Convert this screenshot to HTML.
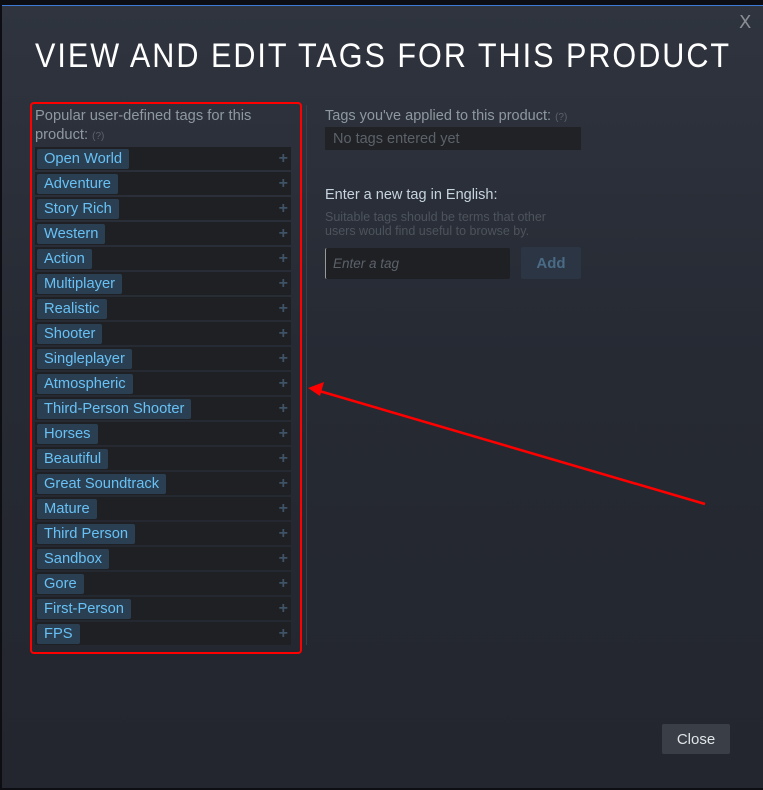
<!DOCTYPE html>
<html><head><style>
*{margin:0;padding:0;box-sizing:border-box}
body{width:763px;height:790px;background:#0c0e13;position:relative;overflow:hidden;font-family:"Liberation Sans","DejaVu Sans",sans-serif}
.dlg{position:absolute;left:2px;top:5px;width:761px;height:783px;background:linear-gradient(180deg,#2f343f 0%,#262a33 45%,#23262e 100%);border-top:1px solid #3d7ad6}
.x{position:absolute;left:739px;top:12px;color:#8a8e94;font-size:18px;font-family:"DejaVu Sans",sans-serif}
.title{position:absolute;left:35px;top:36px;color:#fff;font-size:34px;line-height:41px;letter-spacing:2.2px;white-space:nowrap;font-family:"Liberation Sans",sans-serif;transform:scaleX(0.9);transform-origin:left}
.red{position:absolute;left:30px;top:102px;width:272px;height:552px;border:2.5px solid #f00;border-radius:4px}
.lbl{position:absolute;left:35px;top:107px;width:262px;color:#8f98a0;font-size:14.7px;line-height:19px}
.q{font-size:10px;color:#5c626a}
.row{position:absolute;left:35px;width:256px;height:23px;background:#1f2024}
.tag{position:absolute;left:2px;top:2px;height:20px;background:#2b3f52;color:#67c1f5;font-size:14.7px;line-height:21px;padding:0 7px;border-radius:2px;white-space:nowrap}
.plus{position:absolute;right:3px;top:0;line-height:23px;color:#3e5366;font-size:16px;font-weight:bold}
.vl{position:absolute;left:306px;top:105px;width:1px;height:540px;background:#3a3e46}
.t2{position:absolute;left:325px;top:108px;color:#8f98a0;font-size:14.5px}
.box{position:absolute;left:325px;top:127px;width:256px;height:23px;background:#202226;color:#5c626a;font-size:14.5px;line-height:25px;padding-left:8px}
.t3{position:absolute;left:325px;top:187px;color:#c6d4df;font-size:14.5px}
.t4{position:absolute;left:325px;top:210px;color:#4d545c;font-size:12.5px;line-height:14px}
.inp{position:absolute;left:325px;top:248px;width:185px;height:31px;background:#1e2024;border-radius:2px;color:#5c626a;font-style:italic;font-size:13.5px;line-height:31px;padding-left:7px;border-left:1px solid #999}
.add{position:absolute;left:521px;top:247px;width:60px;height:32px;background:#2b3543;color:#4a6b85;font-size:15px;font-weight:bold;text-align:center;line-height:33px;border-radius:2px}
.close{position:absolute;left:662px;top:724px;width:68px;height:30px;background:#3a3e47;color:#e0e4e8;font-size:15px;text-align:center;line-height:31px;border-radius:2px}
svg{position:absolute;left:0;top:0}
</style></head><body>
<div class="dlg"></div>
<div class="x">X</div>
<div class="title">VIEW AND EDIT TAGS FOR THIS PRODUCT</div>
<div class="lbl">Popular user-defined tags for this product: <span class="q">(?)</span></div>
<div class="row" style="top:147px"><span class="tag">Open World</span><span class="plus">+</span></div>
<div class="row" style="top:172px"><span class="tag">Adventure</span><span class="plus">+</span></div>
<div class="row" style="top:197px"><span class="tag">Story Rich</span><span class="plus">+</span></div>
<div class="row" style="top:222px"><span class="tag">Western</span><span class="plus">+</span></div>
<div class="row" style="top:247px"><span class="tag">Action</span><span class="plus">+</span></div>
<div class="row" style="top:272px"><span class="tag">Multiplayer</span><span class="plus">+</span></div>
<div class="row" style="top:297px"><span class="tag">Realistic</span><span class="plus">+</span></div>
<div class="row" style="top:322px"><span class="tag">Shooter</span><span class="plus">+</span></div>
<div class="row" style="top:347px"><span class="tag">Singleplayer</span><span class="plus">+</span></div>
<div class="row" style="top:372px"><span class="tag">Atmospheric</span><span class="plus">+</span></div>
<div class="row" style="top:397px"><span class="tag">Third-Person Shooter</span><span class="plus">+</span></div>
<div class="row" style="top:422px"><span class="tag">Horses</span><span class="plus">+</span></div>
<div class="row" style="top:447px"><span class="tag">Beautiful</span><span class="plus">+</span></div>
<div class="row" style="top:472px"><span class="tag">Great Soundtrack</span><span class="plus">+</span></div>
<div class="row" style="top:497px"><span class="tag">Mature</span><span class="plus">+</span></div>
<div class="row" style="top:522px"><span class="tag">Third Person</span><span class="plus">+</span></div>
<div class="row" style="top:547px"><span class="tag">Sandbox</span><span class="plus">+</span></div>
<div class="row" style="top:572px"><span class="tag">Gore</span><span class="plus">+</span></div>
<div class="row" style="top:597px"><span class="tag">First-Person</span><span class="plus">+</span></div>
<div class="row" style="top:622px"><span class="tag">FPS</span><span class="plus">+</span></div>
<div class="red"></div>
<div class="vl"></div>
<div class="t2">Tags you've applied to this product: <span class="q">(?)</span></div>
<div class="box">No tags entered yet</div>
<div class="t3">Enter a new tag in English:</div>
<div class="t4">Suitable tags should be terms that other<br>users would find useful to browse by.</div>
<div class="inp">Enter a tag</div>
<div class="add">Add</div>
<div class="close">Close</div>
<svg width="763" height="790"><line x1="705" y1="504" x2="316" y2="390" stroke="#f00" stroke-width="2.5"/><path d="M308 388 L324 382 L320 396 Z" fill="#f00"/></svg>
</body></html>
